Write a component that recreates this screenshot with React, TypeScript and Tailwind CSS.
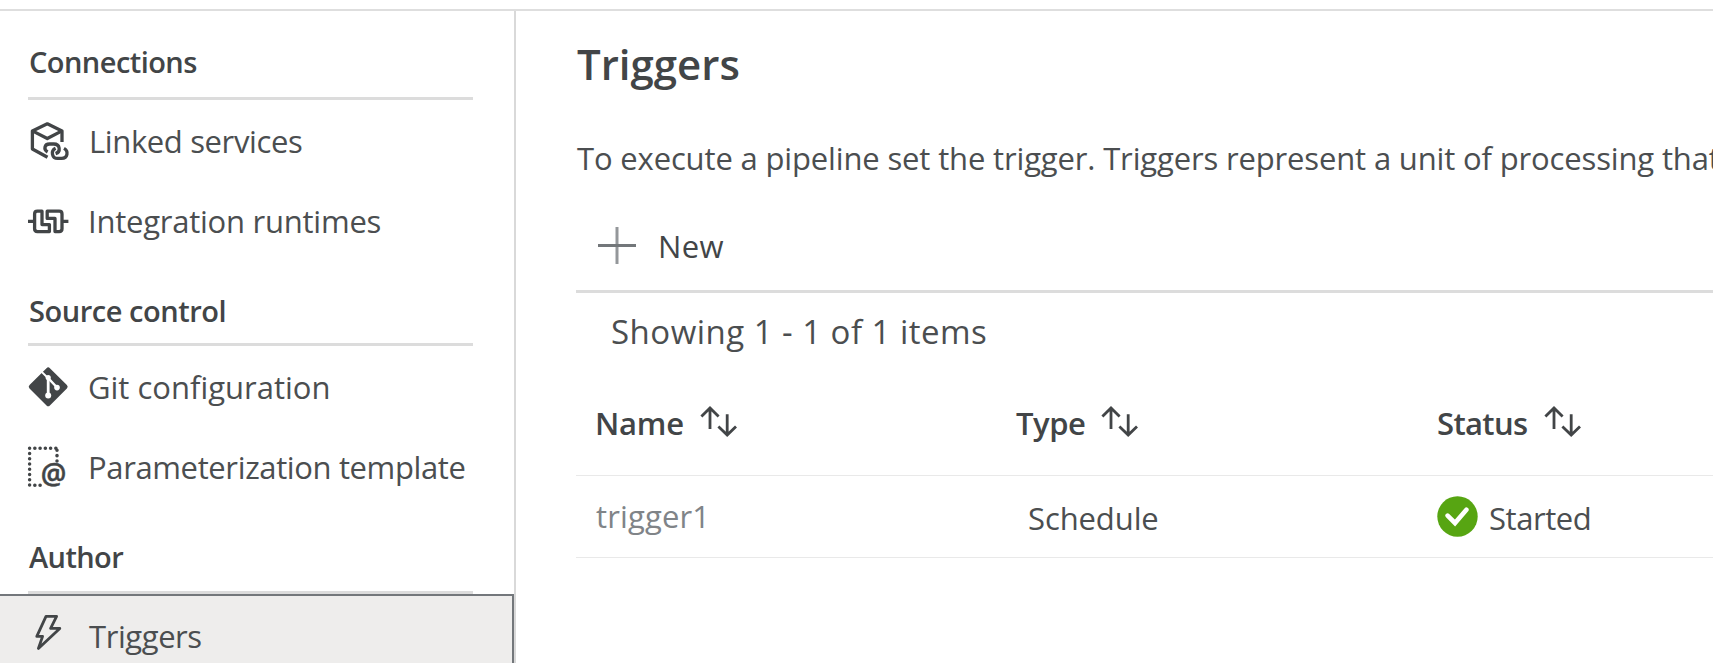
import React, { ReactNode } from 'react';

const iconClass = 'h-10 w-10 shrink-0 overflow-visible';

function LinkedServicesIcon() {
  return (
    <svg className={iconClass} viewBox="0 0 40 40" fill="none" stroke="#424547" strokeWidth="3.3" strokeLinejoin="round">
      <path d="M34 21V9.9L19.3 2.8 4.4 9.9V28L19.5 36.3" />
      <path d="M4.4 9.9l14.9 7.6 14.7-7.6" />
      <path d="M19.6 31C15.4 28.6 16.2 23 21.6 23H25.8C32.2 23 33 30.8 27.6 32.6" />
      <path d="M27.6 27.2C22.4 29.6 23.8 37.4 29.6 37.4H33.6C39.8 37.4 40.8 30 36 27.4" />
    </svg>
  );
}

function IntegrationIcon() {
  return (
    <svg className={iconClass} viewBox="0 0 40 40" fill="none" stroke="#424547" strokeWidth="3.3" strokeLinejoin="round">
      <path d="M14 10.2H9.4Q6.6 10.2 6.6 13V27.8Q6.6 30.6 9.4 30.6H21.4V23.6H14Z" />
      <path d="M19.2 10.2H31.2Q34 10.2 34 13V27.8Q34 30.6 31.2 30.6H27V17.4H19.2Z" />
      <path d="M0 20.3H6M34 20.3H40.4" />
    </svg>
  );
}

function GitIcon() {
  return (
    <svg className={iconClass} viewBox="0 0 40 40">
      <rect x="5.8" y="5.4" width="28.8" height="28.8" rx="2.4" transform="rotate(45 20.2 19.8)" fill="#424547" />
      <g stroke="#fff" fill="none" strokeLinecap="round">
        <path d="M13.2 4.4L20.2 11.2" strokeWidth="2" />
        <path d="M20.2 11V28" strokeWidth="2.8" />
        <path d="M20.2 11.2L28.6 20" strokeWidth="2.4" />
      </g>
      <circle cx="20.2" cy="10.6" r="2.6" fill="#fff" />
      <circle cx="20.2" cy="28.6" r="3" fill="#fff" />
      <circle cx="29" cy="20.6" r="2.8" fill="#fff" />
    </svg>
  );
}

function TemplateIcon() {
  return (
    <svg className={iconClass} viewBox="0 0 40 40">
      <g fill="none" stroke="#424547" strokeWidth="3.5" strokeLinecap="round">
        <path d="M1.6 1.2V38.2" strokeDasharray="0.1 5.15" />
        <path d="M6.8 1.2H28.8" strokeDasharray="0.1 5.15" />
        <path d="M29 3.2V16" strokeDasharray="0.1 5.3" />
        <path d="M6.8 38.2H14" strokeDasharray="0.1 5.15" />
      </g>
      <text x="12.8" y="37" fontSize="28.5" fontWeight="600" fill="#424547" stroke="#424547" strokeWidth="0.5" fontFamily="'Open Sans', sans-serif">@</text>
    </svg>
  );
}

function BoltIcon() {
  return (
    <svg className={iconClass} viewBox="0 0 40 40" fill="none" stroke="#424547" strokeWidth="2.8" strokeLinejoin="round">
      <path d="M18 0.4H28.6L22.6 12.4H31.8L10.4 32.4L14.6 20.4H8.8Z" />
    </svg>
  );
}

function SortIcon() {
  return (
    <svg className="h-[33px] w-[37px]" viewBox="0 0 37 33" fill="none" stroke="#424547" strokeWidth="2.8">
      <path d="M10 23V2.2M1.4 10.6L10 2L18.6 10.6" />
      <path d="M27.2 8.2V29M18.4 20.4L27.2 29L36 20.4" />
    </svg>
  );
}

function Heading({ className, tracking, children }: { className: string; tracking: string; children: ReactNode }) {
  return (
    <h2 className={`ml-7 w-[445px] border-b-[3px] border-[#dcdcdc] pl-px text-[29px] leading-10 font-semibold text-[#424547] ${className} ${tracking}`}>
      {children}
    </h2>
  );
}

function NavItem({ icon, tracking, children }: { icon: ReactNode; tracking: string; children: ReactNode }) {
  return (
    <li className="flex h-20 items-center gap-5 pl-7">
      {icon}
      <span className={tracking}>{children}</span>
    </li>
  );
}

function Column({ tracking, children }: { tracking: string; children: ReactNode }) {
  return (
    <div className="flex h-[41px] items-center gap-4">
      <span className={tracking}>{children}</span>
      <SortIcon />
    </div>
  );
}

export default function App() {
  return (
    <div className="flex h-[663px] flex-col overflow-hidden bg-white font-['Open_Sans',sans-serif] text-[31px] leading-10 whitespace-nowrap text-[#4b4e50]">
      <div className="h-[11px] shrink-0 border-b-2 border-[#dedede]" />
      <div className="flex min-h-0 flex-1">
        <nav className="w-[516px] shrink-0 border-r-2 border-[#d9d9d9]">
          <Heading className="h-[89px] pt-[31px]" tracking="tracking-[-0.55px]">Connections</Heading>
          <ul className="mt-px">
            <NavItem icon={<LinkedServicesIcon />} tracking="pl-px tracking-[-0.37px]">Linked services</NavItem>
            <NavItem icon={<IntegrationIcon />} tracking="tracking-[-0.24px]">Integration runtimes</NavItem>
          </ul>
          <Heading className="h-[85px] pt-[30px]" tracking="tracking-[-0.45px]">Source control</Heading>
          <ul className="mt-px">
            <NavItem icon={<GitIcon />} tracking="tracking-normal">Git configuration</NavItem>
            <NavItem icon={<TemplateIcon />} tracking="tracking-[-0.37px]">Parameterization template</NavItem>
          </ul>
          <Heading className="h-[87px] pt-[30px]" tracking="tracking-[-0.6px]">Author</Heading>
          <ul className="border-t-2 border-r-2 border-[#73777b] bg-[#eeedec]">
            <NavItem icon={<BoltIcon />} tracking="pl-px tracking-[-0.42px]">Triggers</NavItem>
          </ul>
        </nav>
        <main className="min-w-0 flex-1 pt-[25px] pl-[60px]">
          <h1 className="pl-px text-[42px] leading-[56px] font-semibold text-[#424547]">Triggers</h1>
          <p className="mt-[46px] pl-px tracking-[-0.15px]">
            To execute a pipeline set the trigger. Triggers represent a unit of processing that
          </p>
          <div className="mt-12 flex items-center gap-[21px] border-b-[3px] border-[#dcdcdc] pb-6 pl-[21px] text-[#424547]">
            <svg className="h-10 w-10" viewBox="0 0 40 40" fill="none">
              <path d="M20 1V38" stroke="#94979a" strokeWidth="3" />
              <path d="M1 19.5H39" stroke="#73777a" strokeWidth="3" />
            </svg>
            <span className="tracking-[0.4px]">New</span>
          </div>
          <p className="mt-[19px] pl-[35px] text-[33px] tracking-[0.48px]">Showing 1 - 1 of 1 items</p>
          <div className="mt-[50px] grid h-[74px] grid-cols-[421px_421px_1fr] border-b border-[#e9e9e9] pl-[19px] font-semibold text-[#424547]">
            <Column tracking="tracking-[-0.2px]">Name</Column>
            <Column tracking="tracking-[-0.45px]">Type</Column>
            <Column tracking="pr-px tracking-[-0.65px]">Status</Column>
          </div>
          <div className="grid h-[82px] grid-cols-[421px_421px_1fr] items-center border-b border-[#e9e9e9] pl-[19px]">
            <span className="pb-0.5 pl-px tracking-[0.15px] text-[#808488]">trigger1</span>
            <span className="pt-0.5 pl-3 tracking-[-0.1px]">Schedule</span>
            <div className="flex items-center gap-[11px]">
              <svg className="h-[41px] w-[41px]" viewBox="0 0 41 41" fill="none">
                <circle cx="20.5" cy="20.5" r="20.2" fill="#57a512" />
                <path d="M10.6 19.6L18 27L29.4 13.8" stroke="#fff" strokeWidth="4.6" strokeLinecap="round" />
              </svg>
              <span className="pt-0.5 tracking-[-0.45px]">Started</span>
            </div>
          </div>
        </main>
      </div>
    </div>
  );
}
